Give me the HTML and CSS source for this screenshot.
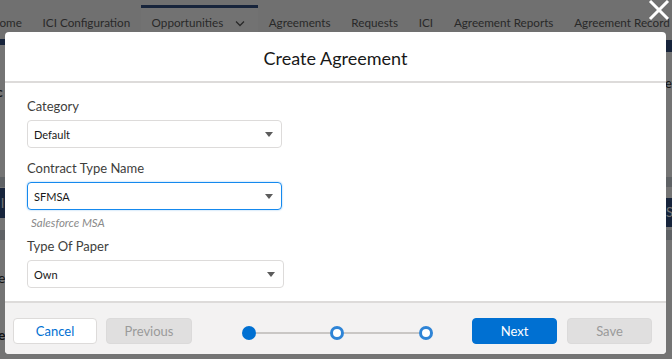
FILE: index.html
```html
<!DOCTYPE html>
<html lang="en">
<head>
    <meta charset="UTF-8">
    <title>Create Agreement</title>
    <link rel="stylesheet" href="styles.css">
</head>
<body>

    <div class="page">
        <nav class="tabs">
            <span class="tab cut">ome</span>
            <span class="tab">ICI Configuration</span>
            <span class="tab active">Opportunities
                <svg class="chev" width="10" height="7" viewBox="0 0 10 7"><path d="M1 1.5 L5 5.5 L9 1.5" fill="none" stroke="#3a3a3a" stroke-width="1.3"/></svg>
            </span>
            <span class="tab">Agreements</span>
            <span class="tab">Requests</span>
            <span class="tab">ICI</span>
            <span class="tab">Agreement Reports</span>
            <span class="tab">Agreement Record</span>
        </nav>
        <div class="behind">
            <div class="side left">
                <div class="bar b1"></div>
                <div class="glyph g1">c</div>
                <div class="strip s1"></div>
                <div class="bar b2">l</div>
                <div class="strip s2"></div>
                <div class="glyph g2">e</div>
                <div class="glyph g3">e</div>
            </div>
            <div class="side right">
                <div class="bar b3"></div>
                <div class="glyph g4">ef</div>
                <div class="strip s3"></div>
                <div class="bar b4">S</div>
                <div class="strip s4"></div>
            </div>
        </div>
    </div>

    <div class="overlay"></div>

    <svg class="close" width="22" height="22" viewBox="0 0 22 22"><path d="M2 1 L20 19 M20 1 L2 19" stroke="#fff" stroke-width="3"/></svg>

    <div class="modal">
        <div class="modal-header">Create Agreement</div>
        <div class="modal-body">
            <div class="field">
                <label>Category</label>
                <div class="select">Default<span class="caret"></span></div>
            </div>
            <div class="field">
                <label>Contract Type Name</label>
                <div class="select focus">SFMSA<span class="caret"></span></div>
                <div class="help">Salesforce MSA</div>
            </div>
            <div class="field">
                <label>Type Of Paper</label>
                <div class="select wide">Own<span class="caret"></span></div>
            </div>
        </div>
        <div class="modal-footer">
            <button class="btn neutral">Cancel</button>
            <button class="btn disabled prev">Previous</button>
            <div class="steps">
                <span class="dot done"></span>
                <span class="line"></span>
                <span class="dot"></span>
                <span class="line"></span>
                <span class="dot"></span>
            </div>
            <button class="btn brand">Next</button>
            <button class="btn disabled">Save</button>
        </div>
    </div>

</body>
</html>
```

FILE: styles.css
```css
body {
    font-family: 'Lato', 'Open Sans', sans-serif;
    margin: 0;
    padding: 0;
    width: 672px;
    height: 359px;
    overflow: hidden;
    position: relative;
    background: #fff;
}
.page {
    height: 359px;
}
.tabs {
    display: flex;
    align-items: stretch;
    height: 38px;
    padding-top: 5px;
    background: #f3f3f3;
    font-size: 11.7px;
    color: #3a3a3a;
    white-space: nowrap;
}
.tab {
    display: flex;
    align-items: center;
    padding: 0 10.4px 7px 10.4px;
    border-top: 3px solid transparent;
}
.tab.cut {
    margin-left: -11px;
}
.tab.active {
    background: #fafafa;
    border-top-color: #0b2f6a;
    padding-left: 11px;
    padding-right: 13px;
}
.chev {
    margin-left: 12px;
    margin-top: 2px;
}
.behind {
    display: flex;
    justify-content: space-between;
    font-weight: bold;
    font-size: 14px;
}
.side {
    width: 14px;
    display: flex;
    flex-direction: column;
}
.side.right {
    width: 7px;
}
.glyph {
    height: 20px;
    line-height: 20px;
    overflow: hidden;
}
.bar {
    background: #0b2f6a;
    color: #fff;
    font-weight: normal;
    font-size: 13px;
    overflow: hidden;
}
.strip {
    background: #c9cfd8;
    height: 10px;
}
.b1 { height: 6px; margin-top: -4px; }
.g1 { margin-top: 37px; margin-left: -4px; }
.s1 { margin-top: 75px; }
.b2 { margin-top: 1px; height: 30px; line-height: 30px; padding-left: 1px; }
.s2 { margin-top: 12px; }
.g2 { margin-top: 28px; margin-left: -2px; font-weight: normal; }
.g3 { margin-top: 37px; margin-left: -2px; }
.b3 { height: 12px; margin-top: -3px; }
.g4 { margin-top: 21px; font-weight: normal; font-size: 13px; }
.s3 { margin-top: 84px; }
.b4 { margin-top: 11px; height: 29px; line-height: 29px; padding-left: 1px; }
.s4 { margin-top: 3px; }
.overlay {
    position: absolute;
    inset: 0;
    background: rgba(30, 30, 30, 0.62);
}
.close {
    position: absolute;
    top: 0;
    left: 648px;
}
.modal {
    position: absolute;
    top: 32px;
    left: 5px;
    width: 661px;
    height: 322px;
    background: #fff;
    border-radius: 4px;
    overflow: hidden;
    display: flex;
    flex-direction: column;
}
.modal-header {
    height: 47px;
    padding-top: 3px;
    border-bottom: 2px solid #dddbda;
    display: flex;
    align-items: center;
    justify-content: center;
    font-size: 18px;
    color: #181818;
}
.modal-body {
    flex: 1;
    padding: 16px 22px 0 22px;
}
.field {
    width: 255px;
    margin-bottom: 13px;
}
.field label {
    display: block;
    font-size: 13px;
    line-height: 15px;
    color: #3e3e3c;
    margin-bottom: 6px;
}
.select {
    position: relative;
    height: 26px;
    border: 1px solid #dddbda;
    border-radius: 4px;
    font-size: 11px;
    color: #181818;
    display: flex;
    align-items: center;
    padding-left: 6px;
}
.select.focus {
    border-color: #1589ee;
    box-shadow: 0 0 2px #8fc3f0;
}
.select.wide {
    width: 249px;
}
.caret {
    position: absolute;
    right: 8px;
    top: 11px;
    width: 0;
    height: 0;
    border-left: 4px solid transparent;
    border-right: 4px solid transparent;
    border-top: 5px solid #5c5c5c;
}
.help {
    font-size: 11.5px;
    line-height: 14px;
    font-style: italic;
    color: #8a8a8a;
    margin: 6px 0 -4px 4px;
}
.modal-footer {
    height: 47px;
    padding: 5px 14px 0 8px;
    background: #f3f2f2;
    border-top: 2px solid #dddbda;
    display: flex;
    align-items: center;
}
.btn {
    font-family: inherit;
    font-size: 13px;
    flex: none;
    width: 85px;
    height: 26px;
    border-radius: 4px;
    border: 1px solid #dddbda;
    margin-right: 10px;
    padding: 0;
}
.btn.neutral {
    background: #fff;
    color: #0070d2;
    width: 84px;
    margin-right: 9px;
}
.btn.prev {
    width: 86px;
    margin-right: 50px;
}
.btn.disabled {
    background: #e0dfdf;
    color: #9a9a9a;
    border-color: #dbdada;
}
.btn.brand {
    background: #0070d2;
    border-color: #0070d2;
    color: #fff;
}
.steps {
    flex: none;
    display: flex;
    align-items: center;
    margin: 3px 39px 0 0;
}
.dot {
    box-sizing: border-box;
    width: 14px;
    height: 14px;
    border: 3px solid #2e84d6;
    border-radius: 50%;
    background: #fff;
}
.dot.done {
    border: none;
    background: #0070d2;
}
.line {
    width: 74px;
    height: 2px;
    background: #c9c7c5;
}
.line + .dot + .line {
    width: 75px;
}
```
